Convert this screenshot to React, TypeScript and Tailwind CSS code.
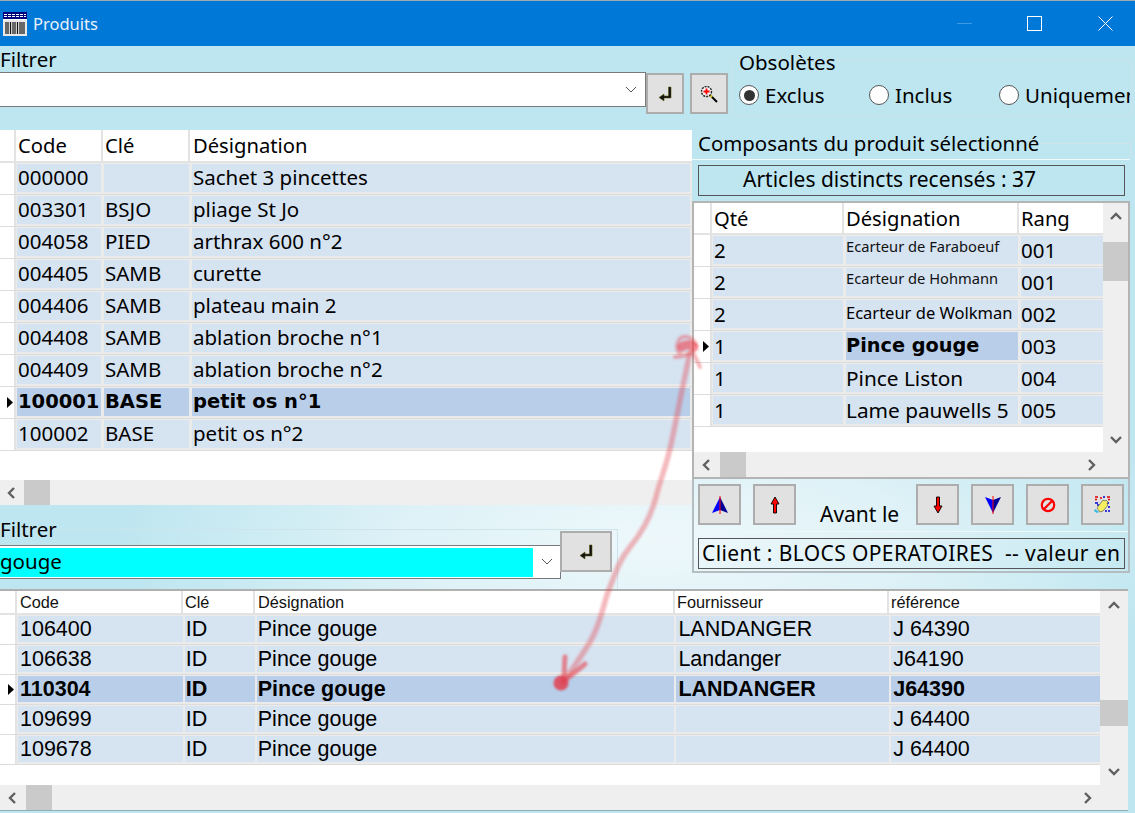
import React from "react";

const cellFont = { fontFamily: '"Noto Sans", "Open Sans", sans-serif' };
const boldFont = { fontFamily: '"DejaVu Sans", sans-serif' };

function ReturnIcon() {
  return (
    <svg width="18" height="18" viewBox="0 0 18 18">
      <path d="M12.500 2h2.500v11H8v3L3 12.500 8 9v2h4.500z" fill="#111" stroke="#5c5a10" strokeWidth="0.6" />
    </svg>
  );
}

function ZoomIcon() {
  return (
    <svg width="20" height="20" viewBox="0 0 20 20">
      <line x1="11" y1="11" x2="18" y2="18" stroke="#000" strokeWidth="2" />
      <line x1="11" y1="11" x2="13" y2="13" stroke="#e8d020" strokeWidth="2" />
      <circle cx="7.500" cy="7.500" r="5" fill="#f4f4f4" stroke="#222" strokeWidth="1.400" strokeDasharray="2 1" />
      <path d="M7.500 4.500v6M4.500 7.500h6" stroke="#f00" strokeWidth="1.800" />
    </svg>
  );
}

function Btn({ w = "w-[43px]", h = "h-[41px]", children, cls = "" }: { w?: string; h?: string; children?: React.ReactNode; cls?: string }) {
  return (
    <div className={`${w} ${h} ${cls} shrink-0 flex items-center justify-center bg-[#e1e1e1] border-2 border-[#adadad]`}>
      {children}
    </div>
  );
}

function Chevron({ dir, color = "#606060" }: { dir: "up" | "down" | "left" | "right"; color?: string }) {
  const d = {
    up: "M2 9l5-5 5 5",
    down: "M2 5l5 5 5-5",
    left: "M9 2L4 7l5 5",
    right: "M5 2l5 5-5 5",
  }[dir];
  return (
    <svg width="14" height="14" viewBox="0 0 14 14">
      <path d={d} fill="none" stroke={color} strokeWidth="2.400" />
    </svg>
  );
}

function Marker() {
  return (
    <svg width="6" height="11" viewBox="0 0 6 11">
      <path d="M0 0l6 5.500-6 5.500z" fill="#000" />
    </svg>
  );
}

function Radio({ on, label, cls }: { on?: boolean; label: string; cls: string }) {
  return (
    <div className={`flex items-center gap-[6px] ${cls}`}>
      <div className="w-[20px] h-[20px] rounded-full bg-white border border-[#555] flex items-center justify-center">
        {on && <div className="w-[11px] h-[11px] rounded-full bg-[#333]" />}
      </div>
      <span className="text-[20.5px] leading-[24px] text-black whitespace-nowrap">{label}</span>
    </div>
  );
}

type Row = { cells: string[]; selected?: boolean };

const topRows: Row[] = [
  { cells: ["000000", "", "Sachet 3 pincettes"] },
  { cells: ["003301", "BSJO", "pliage St Jo"] },
  { cells: ["004058", "PIED", "arthrax 600 n°2"] },
  { cells: ["004405", "SAMB", "curette"] },
  { cells: ["004406", "SAMB", "plateau main 2"] },
  { cells: ["004408", "SAMB", "ablation broche n°1"] },
  { cells: ["004409", "SAMB", "ablation broche n°2"] },
  { cells: ["100001", "BASE", "petit os n°1"], selected: true },
  { cells: ["100002", "BASE", "petit os n°2"] },
];

const compRows = [
  { q: "2", d: "Ecarteur de Faraboeuf", r: "001", small: "text-[#111] text-[14.7px] leading-[20px] pb-[9px]" },
  { q: "2", d: "Ecarteur de Hohmann", r: "001", small: "text-[#111] text-[14.7px] leading-[20px] pb-[9px]" },
  { q: "2", d: "Ecarteur de Wolkman", r: "002", small: "text-black text-[16.5px] leading-[20px] pb-[3px]" },
  { q: "1", d: "Pince gouge", r: "003", sel: true },
  { q: "1", d: "Pince Liston", r: "004" },
  { q: "1", d: "Lame pauwells 5", r: "005" },
];

const bottomRows: Row[] = [
  { cells: ["106400", "ID", "Pince gouge", "LANDANGER", "J 64390"] },
  { cells: ["106638", "ID", "Pince gouge", "Landanger", "J64190"] },
  { cells: ["110304", "ID", "Pince gouge", "LANDANGER", "J64390"], selected: true },
  { cells: ["109699", "ID", "Pince gouge", "", "J 64400"] },
  { cells: ["109678", "ID", "Pince gouge", "", "J 64400"] },
];

export default function App() {
  return (
    <div
      className="relative w-[1135px] h-[813px] overflow-hidden flex flex-col text-black bg-[#bee6f0] bg-[radial-gradient(ellipse_540px_190px_at_660px_540px,#eef8fb_0%,#dff2f7_45%,#bee6f0_100%)]"
      style={cellFont}
    >
      {/* Title bar */}
      <div className="h-[46px] shrink-0 bg-[#0078d7] border-t border-[#a0a8b0] flex items-center text-white">
        <svg className="ml-[3px] mt-[1px]" width="24" height="24" viewBox="0 0 24 24">
          <rect x="0" y="0" width="24" height="24" fill="#e8e8e8" />
          <rect x="0" y="0" width="24" height="7" fill="#000080" />
          <path d="M1 2.500h22M1 4.500h22" stroke="#fff" strokeWidth="1" strokeDasharray="3 1" />
          <rect x="0" y="7" width="24" height="1.200" fill="#fff" />
          <path d="M3 10v12M5 10v12M7.500 10v12M10 10v12M12 10v12M14.500 10v12M17 10v12M19 10v12M21 10v12" stroke="#111" strokeWidth="1.200" />
        </svg>
        <span className="ml-[6px] text-[16.5px] leading-[22px] text-[#e8f2fb]">Produits</span>
        <div className="ml-auto flex items-center h-full">
          <div className="w-[15px] h-px bg-[#3d9ae2] mr-[55px]" />
          <div className="w-[15px] h-[15px] border border-white mr-[56px]" />
          <svg className="mr-[22px]" width="15" height="15" viewBox="0 0 15 15">
            <path d="M0.500 0.500l14 14M14.500 0.500l-14 14" stroke="#fff" strokeWidth="1" />
          </svg>
        </div>
      </div>

      {/* Top bar */}
      <div className="h-[84px] shrink-0 flex">
        <div className="w-[731px] shrink-0 flex flex-col">
          <div className="h-[26px] text-[20.5px] leading-[26px]">Filtrer</div>
          <div className="flex">
            <div className="w-[646px] h-[35px] bg-white border-y border-r border-[#7a7a7a] flex items-center justify-end pr-[8px] shrink-0">
              <svg width="12" height="8" viewBox="0 0 12 8">
                <path d="M1 1l5 5 5-5" fill="none" stroke="#555" strokeWidth="1" />
              </svg>
            </div>
            <Btn w="w-[38px]" h="h-[41px]" cls="mt-px">
              <ReturnIcon />
            </Btn>
            <Btn w="w-[38px]" h="h-[41px]" cls="mt-px ml-[6px]">
              <ZoomIcon />
            </Btn>
          </div>
        </div>
        <div className="relative mt-[14px] mb-[14px] w-[401px] border border-[#cbe3ea]">
          <div className="absolute left-[7px] -top-[12px] text-[20.5px] leading-[26px]">Obsolètes</div>
          <div className="relative w-[398px] h-full overflow-hidden">
            <Radio on label="Exclus" cls="absolute left-[7px] top-[22px]" />
            <Radio label="Inclus" cls="absolute left-[137px] top-[22px]" />
            <Radio label="Uniquement" cls="absolute left-[267px] top-[22px]" />
          </div>
        </div>
      </div>

      {/* Middle */}
      <div className="h-[459px] shrink-0 flex">
        {/* Left column */}
        <div className="w-[692px] shrink-0 flex flex-col">
          <div className="h-[350px] shrink-0 bg-white flex flex-col">
            <div className="h-[33px] shrink-0 flex border-b-2 border-[#e3e3e3] text-[20.2px] leading-[31px]">
              <div className="w-[16px] border-r-2 border-[#e3e3e3]" />
              <div className="w-[87px] pl-[2px] border-r-2 border-[#e3e3e3]">Code</div>
              <div className="w-[87px] pl-[2px] border-r-2 border-[#e3e3e3]">Clé</div>
              <div className="flex-1 pl-[3px]">Désignation</div>
            </div>
            {topRows.map((r) => (
              <div key={r.cells[0]} className="h-[32px] shrink-0 flex items-stretch bg-[#ebebeb] border-b border-[#dcdcdc]">
                <div className="w-[16px] shrink-0 bg-white border-r-2 border-[#e3e3e3] flex items-center justify-end pr-[1px]">
                  {r.selected && <Marker />}
                </div>
                {r.cells.map((c, i) => (
                  <div
                    key={i}
                    style={r.selected ? boldFont : undefined}
                    className={`${i === 0 ? "w-[84px] ml-[1px] pl-[1px]" : i === 1 ? "w-[85px] ml-[3px] pl-[1px]" : "w-[498px] ml-[3px] pl-[1px]"} mt-[1px] mb-[2px] shrink-0 whitespace-nowrap ${r.selected ? "bg-[#b8cee9] font-bold text-[19.5px] leading-[28px]" : "bg-[#d6e3f1] text-[20.5px] leading-[26px]"}`}
                  >
                    {c}
                  </div>
                ))}
              </div>
            ))}
            <div className="flex-1 min-h-[29px]" />
          </div>
          <div className="h-[25px] shrink-0 bg-[#efefef] flex items-center">
            <div className="w-[24px] flex justify-center">
              <Chevron dir="left" />
            </div>
            <div className="w-[26px] h-full bg-[#cacaca]" />
          </div>
          <div className="flex-1 relative">
            <div className="absolute left-0 top-[24px] w-[618px] h-[60px] border-t border-r border-[#cfe3ea]" />
            <div className="relative h-[27px] mt-[13px] text-[20.5px] leading-[22px]">Filtrer</div>
            <div className="relative flex items-start">
              <div className="w-[561px] h-[34px] shrink-0 bg-white border-y border-r border-[#7a7a7a] flex items-center py-[2px]">
                <div className="w-[533px] h-[29px] bg-[#00ffff] text-[20.5px] leading-[27px]">gouge</div>
                <svg className="ml-[8px]" width="12" height="8" viewBox="0 0 12 8">
                  <path d="M1 1l5 5 5-5" fill="none" stroke="#555" strokeWidth="1" />
                </svg>
              </div>
              <Btn w="w-[52px]" h="h-[41px]" cls="-mt-[14px] -ml-px">
                <ReturnIcon />
              </Btn>
            </div>
          </div>
        </div>

        {/* Right panel */}
        <div className="relative w-[438px] h-[443px] shrink-0 flex flex-col">
          <div className="absolute left-[340px] right-[-1px] top-[13px] h-[16px] border-t border-r border-[#cfe3ea]" />
          <div className="absolute left-[6px] top-0 text-[20.4px] leading-[26px] whitespace-nowrap">Composants du produit sélectionné</div>
          <div className="mt-[29px] h-[42px] shrink-0 border-t border-[#f0fafc] pl-[6px] pr-[4px] pt-[5px]">
            <div className="h-[31px] w-[427px] border border-[#555] pl-[44px] text-[21px] leading-[27px] whitespace-nowrap">
              Articles distincts recensés : 37
            </div>
          </div>
          <div className="h-[278px] shrink-0 bg-white border-2 border-[#b4b4b4] flex flex-col">
            <div className="flex-1 flex min-h-0">
              <div className="w-[409px] shrink-0 flex flex-col">
                <div className="h-[32px] shrink-0 flex border-b-2 border-[#e3e3e3] text-[20.2px] leading-[30px]">
                  <div className="w-[18px] border-r-2 border-[#e3e3e3]" />
                  <div className="w-[132px] pl-[2px] border-r-2 border-[#e3e3e3]">Qté</div>
                  <div className="w-[175px] pl-[2px] border-r-2 border-[#e3e3e3]">Désignation</div>
                  <div className="flex-1 pl-[2px]">Rang</div>
                </div>
                {compRows.map((r) => (
                  <div key={r.d} className="h-[32px] shrink-0 flex bg-[#ebebeb] border-b border-[#dcdcdc]">
                    <div className="w-[18px] shrink-0 bg-white border-r-2 border-[#e3e3e3] flex items-center justify-end pr-[1px]">
                      {r.sel && <Marker />}
                    </div>
                    <div className="w-[130px] ml-px mt-[1px] mb-[2px] shrink-0 bg-[#d6e3f1] pl-[1px] text-[20.5px] leading-[29px]">{r.q}</div>
                    <div
                      style={r.sel ? boldFont : undefined}
                      className={`w-[172px] ml-[3px] mt-[1px] mb-[2px] shrink-0 whitespace-nowrap flex items-center pt-px ${r.sel ? "bg-[#b8cee9] font-bold text-[19.3px]" : "bg-[#d6e3f1]"} ${r.small ?? (r.sel ? "" : "text-[20.8px]")}`}
                    >
                      {r.d}
                    </div>
                    <div className="w-[82px] ml-[3px] mt-[1px] mb-[2px] shrink-0 bg-[#d6e3f1] pl-0 text-[20.5px] leading-[29px]">{r.r}</div>
                  </div>
                ))}
              </div>
              <div className="flex-1 bg-[#efefef] flex flex-col items-center">
                <div className="h-[28px] flex items-center justify-center"><Chevron dir="up" /></div>
                <div className="w-full h-[39px] mt-[11px] bg-[#cacaca]" />
                <div className="flex-1" />
                <div className="h-[26px] flex items-center justify-center"><Chevron dir="down" /></div>
              </div>
            </div>
            <div className="h-[25px] shrink-0 bg-[#efefef] flex items-center">
              <div className="w-[26px] flex justify-center"><Chevron dir="left" /></div>
              <div className="w-[26px] h-full bg-[#cacaca]" />
              <div className="ml-auto mr-[30px]"><Chevron dir="right" /></div>
            </div>
          </div>
          <div className="flex-1 border-x-2 border-b-2 border-[#b4bec2] flex flex-col">
            <div className="flex pl-[4px] mt-[5px] h-[44px] shrink-0">
              <Btn>
                <svg width="18" height="18" viewBox="0 0 18 18">
                  <path d="M9 1L1 17l8-3z" fill="#0000ff" />
                  <path d="M9 1l8 16-8-3z" fill="#000098" />
                  <path d="M9 0v18" stroke="#f00" strokeWidth="1" />
                </svg>
              </Btn>
              <Btn cls="ml-[12px]">
                <svg width="10" height="18" viewBox="0 0 10 18">
                  <path d="M5 1l4 7H6.500v9h-3V8H1z" fill="#f00" stroke="#000" strokeWidth="0.900" />
                </svg>
              </Btn>
              <div className="w-[120px] text-[21px] leading-[24px] pt-[18px] pl-[24px] whitespace-nowrap">Avant le</div>
              <Btn>
                <svg width="10" height="18" viewBox="0 0 10 18">
                  <path d="M5 17l4-7H6.500V1h-3v9H1z" fill="#f00" stroke="#000" strokeWidth="0.900" />
                </svg>
              </Btn>
              <Btn cls="ml-[12px]">
                <svg width="18" height="18" viewBox="0 0 18 18">
                  <path d="M9 17L1 1l8 3z" fill="#0000ff" />
                  <path d="M9 17L17 1 9 4z" fill="#000098" />
                  <path d="M9 0v18" stroke="#f00" strokeWidth="1" />
                </svg>
              </Btn>
              <Btn cls="ml-[12px]">
                <svg width="16" height="16" viewBox="0 0 16 16">
                  <circle cx="8" cy="8" r="6.200" fill="none" stroke="#f00" strokeWidth="2.200" />
                  <path d="M3.500 12.500l9-9" stroke="#f00" strokeWidth="2.200" />
                </svg>
              </Btn>
              <Btn cls="ml-[12px]">
                <svg width="17" height="17" viewBox="0 0 17 17">
                  <path d="M1 1h3M1 3.500h2M13 1h3M14 3.500h2M6 2h2" stroke="#e00000" strokeWidth="1.400" />
                  <path d="M9 1h2M12 7h3M11 15h2M14 15h2M14 11h2M1 7h3M3 9h2" stroke="#0000d0" strokeWidth="1.400" />
                  <path d="M3 12l6-8 2 1 1-1 2 2-1 2 1 1-5 6-3 1z" fill="#f6f060" stroke="#444" strokeWidth="0.600" />
                  <path d="M1 13l4 3-2 1-3-2z" fill="#30b8e0" />
                </svg>
              </Btn>
            </div>
            <div className="mt-[3px] pl-[4px] border-t border-[#eef8fb] pt-[6px]">
              <div className="w-[427px] h-[31px] border border-[#555] px-[3px] text-[21px] tracking-[0.4px] leading-[28px] whitespace-nowrap overflow-hidden">
                Client : BLOCS OPERATOIRES&nbsp; -- valeur en
              </div>
            </div>
          </div>
        </div>
      </div>

      {/* Bottom grid */}
      <div
        className="w-[1128px] h-[222px] shrink-0 border-t-2 border-b border-t-[#b0b0b0] border-b-[#8fb0b8] bg-white flex flex-col text-[21.5px]"
        style={{ fontFamily: '"Liberation Sans", Arial, sans-serif' }}
      >
        <div className="flex-1 flex min-h-0">
          <div className="w-[1100px] shrink-0 flex flex-col">
            <div className="h-[24px] shrink-0 flex border-b-2 border-[#e3e3e3] text-[16.3px] leading-[22px] text-[#111]">
              <div className="w-[17px] border-r-2 border-[#e3e3e3]" />
              <div className="w-[166px] pl-[3px] border-r-2 border-[#e3e3e3]">Code</div>
              <div className="w-[72px] pl-[2px] border-r-2 border-[#e3e3e3]">Clé</div>
              <div className="w-[420px] pl-[3px] border-r-2 border-[#e3e3e3]">Désignation</div>
              <div className="w-[214px] pl-[2px] border-r-2 border-[#e3e3e3]">Fournisseur</div>
              <div className="flex-1 pl-[2px]">référence</div>
            </div>
            {bottomRows.map((r) => (
              <div key={r.cells[0]} className="h-[30px] shrink-0 flex bg-[#ebebeb] border-b border-[#dcdcdc]">
                <div className="w-[17px] shrink-0 bg-white border-r-2 border-[#e3e3e3] flex items-center justify-end pr-[1px]">
                  {r.selected && <Marker />}
                </div>
                {r.cells.map((c, i) => (
                  <div
                    key={i}
                    className={`${["w-[165px] ml-px pl-[2px]", "w-[70px] ml-[2px] pl-[1px]", "w-[418px] ml-[2px] pl-[1px]", "w-[213px] ml-[2px] pl-[2px]", "w-[209px] ml-[2px] pl-[2px]"][i]} mt-px mb-[2px] leading-[27px] whitespace-nowrap ${r.selected ? "bg-[#b8cee9] font-bold" : "bg-[#d6e3f1]"}`}
                  >
                    {c}
                  </div>
                ))}
              </div>
            ))}
          </div>
          <div className="flex-1 bg-[#efefef] flex flex-col items-center">
            <div className="h-[30px] flex items-center justify-center"><Chevron dir="up" /></div>
            <div className="w-full h-[26px] mt-[79px] bg-[#cacaca]" />
            <div className="flex-1" />
            <div className="h-[28px] flex items-center justify-center"><Chevron dir="down" /></div>
          </div>
        </div>
        <div className="h-[25px] shrink-0 bg-[#efefef] flex items-center">
          <div className="w-[26px] flex justify-center"><Chevron dir="left" /></div>
          <div className="w-[26px] h-full bg-[#cacaca]" />
          <div className="ml-auto mr-[34px]"><Chevron dir="right" /></div>
        </div>
      </div>

      {/* Hand-drawn red arrow over the grids */}
      <svg className="absolute inset-0 pointer-events-none" width="1135" height="813" viewBox="0 0 1135 813">
        <defs>
          <filter id="soft" x="-10%" y="-10%" width="120%" height="120%">
            <feGaussianBlur stdDeviation="1.300" />
          </filter>
        </defs>
        <g filter="url(#soft)" fill="none" strokeLinecap="round" strokeLinejoin="round">
          <path
            d="M690 352C684 380 677 415 672 440C667 465 660 480 656 497C650 520 640 535 630 547C618 562 615 575 608 592C602 610 600 625 590 642C582 655 572 670 563 682"
            stroke="#e64650"
            strokeOpacity="0.38"
            strokeWidth="5.500"
          />
          <path d="M696 345c-4-10-14-10-17-5s-3 10 2 15M675 357c5 0 10-2 15-3M693 352c2 6 5 10 7 15" stroke="#e64650" strokeOpacity="0.4" strokeWidth="4" />
          <path d="M682 347c3-3 9-3 12 0" stroke="#f0303c" strokeOpacity="0.55" strokeWidth="9" />
          <path d="M565 657c-1 10 0 16-2 24M585 664c-6 5-12 10-20 16" stroke="#e64650" strokeOpacity="0.6" strokeWidth="5" />
          <circle cx="561" cy="683" r="7.500" fill="#e04050" fillOpacity="0.85" />
        </g>
      </svg>
    </div>
  );
}
